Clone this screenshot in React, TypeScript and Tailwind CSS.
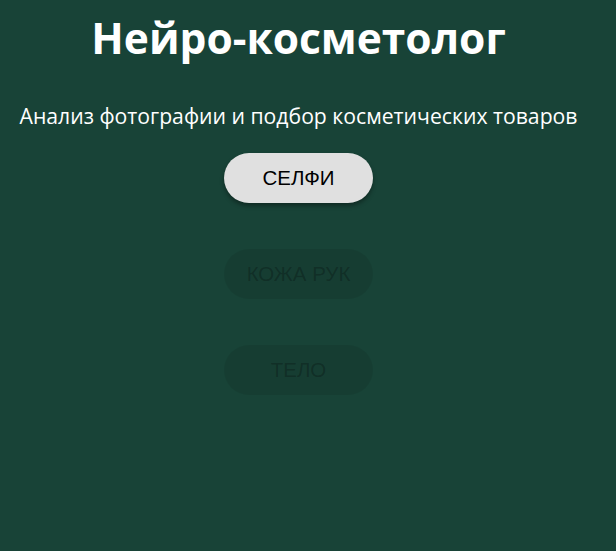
const buttons = [
  { label: 'СЕЛФИ', enabled: true },
  { label: 'КОЖА РУК', enabled: false },
  { label: 'ТЕЛО', enabled: false },
];

export default function App() {
  return (
    <div className="min-h-[551px] w-full bg-[#184337]" style={{ fontFamily: '"Open Sans", sans-serif' }}>
      <div className="w-[597px] flex flex-col items-center text-white">
        <h1 className="mt-[8px] text-[42.5px] font-bold leading-[60px]">Нейро-косметолог</h1>
        <p className="mt-[35px] text-[21.2px] leading-[26px]">Анализ фотографии и подбор косметических товаров</p>
        <div className="mt-[24px] flex flex-col gap-[46px]">
          {buttons.map((b) => (
            <button
              key={b.label}
              disabled={!b.enabled}
              className={
                b.enabled
                  ? 'w-[149px] h-[50px] rounded-full bg-[#e0e0e0] text-black text-[20.5px] shadow-[0_3px_4px_rgba(0,0,0,0.35)]'
                  : 'w-[149px] h-[50px] rounded-full bg-[rgba(0,0,0,0.08)] text-[rgba(0,0,0,0.24)] text-[20.5px]'
              }
              style={{ fontFamily: '"Liberation Sans", Arial, sans-serif' }}
            >
              {b.label}
            </button>
          ))}
        </div>
      </div>
    </div>
  );
}
